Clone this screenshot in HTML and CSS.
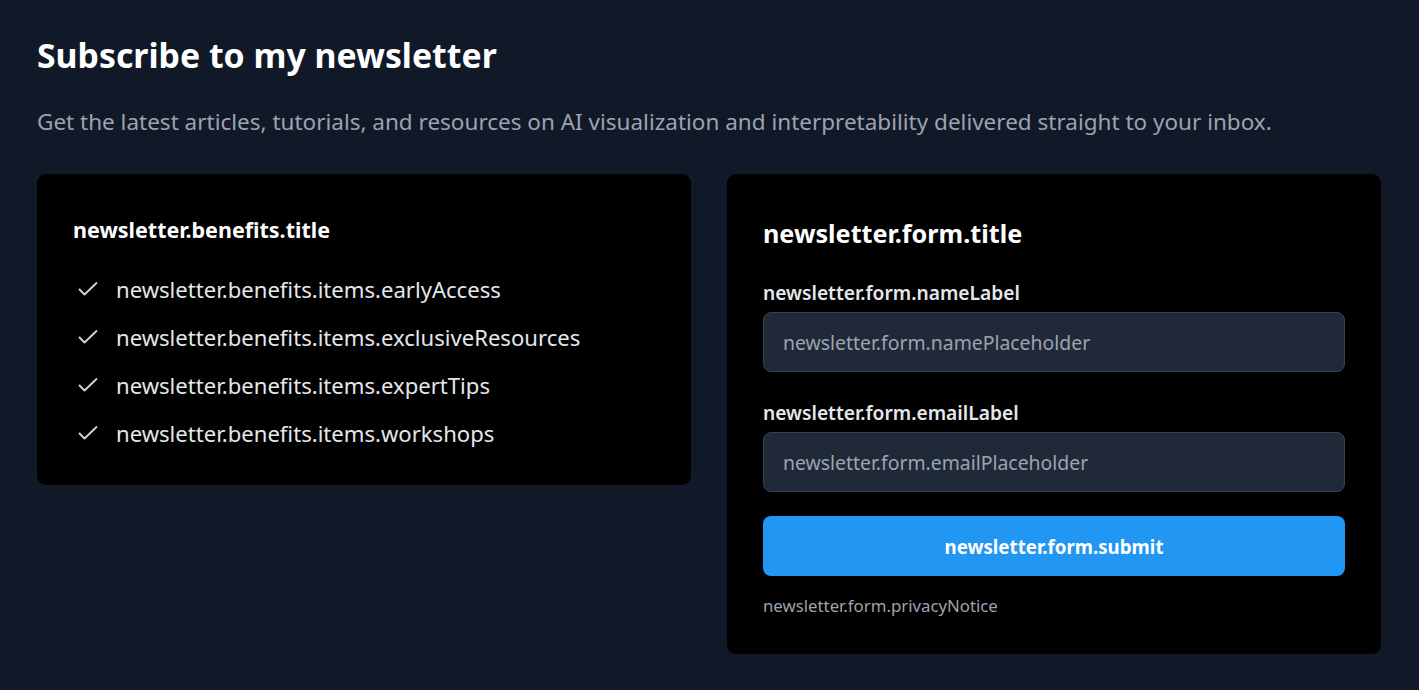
FILE: index.html
```html
<!DOCTYPE html>
<html lang="en">
<head>
<meta charset="utf-8">
<title>Newsletter</title>
<link rel="stylesheet" href="styles.css">
</head>
<body>
<main class="page">
  <h1 class="page-title">Subscribe to my newsletter</h1>
  <p class="page-sub">Get the latest articles, tutorials, and resources on AI visualization and interpretability delivered straight to your inbox.</p>
  <div class="cards">
    <section class="card benefits">
      <h2 class="benefits-title">newsletter.benefits.title</h2>
      <ul class="benefit-list">
        <li class="benefit"><svg class="check" viewBox="0 0 20 14" width="20" height="14"><polyline points="1.5,7.5 6.5,12.5 18.5,1" /></svg><span>newsletter.benefits.items.earlyAccess</span></li>
        <li class="benefit"><svg class="check" viewBox="0 0 20 14" width="20" height="14"><polyline points="1.5,7.5 6.5,12.5 18.5,1" /></svg><span>newsletter.benefits.items.exclusiveResources</span></li>
        <li class="benefit"><svg class="check" viewBox="0 0 20 14" width="20" height="14"><polyline points="1.5,7.5 6.5,12.5 18.5,1" /></svg><span>newsletter.benefits.items.expertTips</span></li>
        <li class="benefit"><svg class="check" viewBox="0 0 20 14" width="20" height="14"><polyline points="1.5,7.5 6.5,12.5 18.5,1" /></svg><span>newsletter.benefits.items.workshops</span></li>
      </ul>
    </section>
    <section class="card form-card">
      <h2 class="form-title">newsletter.form.title</h2>
      <form class="form">
        <label class="field">
          <span class="label">newsletter.form.nameLabel</span>
          <input class="input" type="text" placeholder="newsletter.form.namePlaceholder">
        </label>
        <label class="field">
          <span class="label">newsletter.form.emailLabel</span>
          <input class="input" type="email" placeholder="newsletter.form.emailPlaceholder">
        </label>
        <button class="submit" type="button">newsletter.form.submit</button>
        <p class="notice">newsletter.form.privacyNotice</p>
      </form>
    </section>
  </div>
</main>
</body>
</html>
```

FILE: styles.css
```css
* { box-sizing: border-box; }
html, body { margin: 0; padding: 0; }
body {
  background: #111827;
  color: #ffffff;
  font-family: "Noto Sans", "Open Sans", "DejaVu Sans", sans-serif;
  min-height: 690px;
}
.page {
  padding: 35px 38px 36px 37px;
}
.page-title {
  margin: 0;
  font-size: 33.8px;
  line-height: 40px;
  font-weight: 700;
  color: #ffffff;
}
.page-sub {
  margin: 31px 0 0;
  font-size: 22.5px;
  line-height: 32px;
  color: #9ca3af;
}
.cards {
  margin-top: 36px;
  display: grid;
  grid-template-columns: 1fr 1fr;
  gap: 36px;
  align-items: start;
}
.card {
  background: #000000;
  border-radius: 9px;
  padding: 36px;
}
.benefits-title {
  margin: 0;
  font-size: 21.5px;
  line-height: 40px;
  font-weight: 700;
  color: #ffffff;
}
.benefit-list {
  list-style: none;
  margin: 23px 0 0;
  padding: 0;
  display: flex;
  flex-direction: column;
  gap: 16px;
}
.benefit {
  display: flex;
  align-items: center;
  gap: 18px;
  padding-left: 5px;
  font-size: 22.1px;
  line-height: 32px;
  color: #e5e7eb;
}
.check {
  flex: none;
  fill: none;
  stroke: #d1d5db;
  stroke-width: 1.8;
  stroke-linecap: round;
  stroke-linejoin: round;
}
.form-title {
  margin: 0;
  font-size: 25.2px;
  line-height: 46px;
  font-weight: 700;
  color: #ffffff;
}
.form {
  margin: 23px 0 0;
  display: flex;
  flex-direction: column;
}
.field {
  display: flex;
  flex-direction: column;
  gap: 5px;
  margin-bottom: 27px;
}
.field + .field { margin-bottom: 24px; }
.label {
  font-size: 19.2px;
  line-height: 28px;
  font-weight: 600;
  color: #e5e7eb;
}
.input {
  height: 60px;
  width: 100%;
  background: #1f2937;
  border: 1px solid #374151;
  border-radius: 8px;
  padding: 0 19px;
  font-family: inherit;
  font-size: 19.4px;
  color: #e5e7eb;
  outline: none;
}
.input::placeholder { color: #9ca3af; opacity: 1; }
.submit {
  height: 60px;
  width: 100%;
  background: #2196f3;
  border: 0;
  border-radius: 8px;
  color: #ffffff;
  font-family: inherit;
  font-size: 18.7px;
  font-weight: 700;
  cursor: pointer;
}
.notice {
  margin: 18px 0 0;
  font-size: 16.8px;
  line-height: 24px;
  color: #9ca3af;
}
```
